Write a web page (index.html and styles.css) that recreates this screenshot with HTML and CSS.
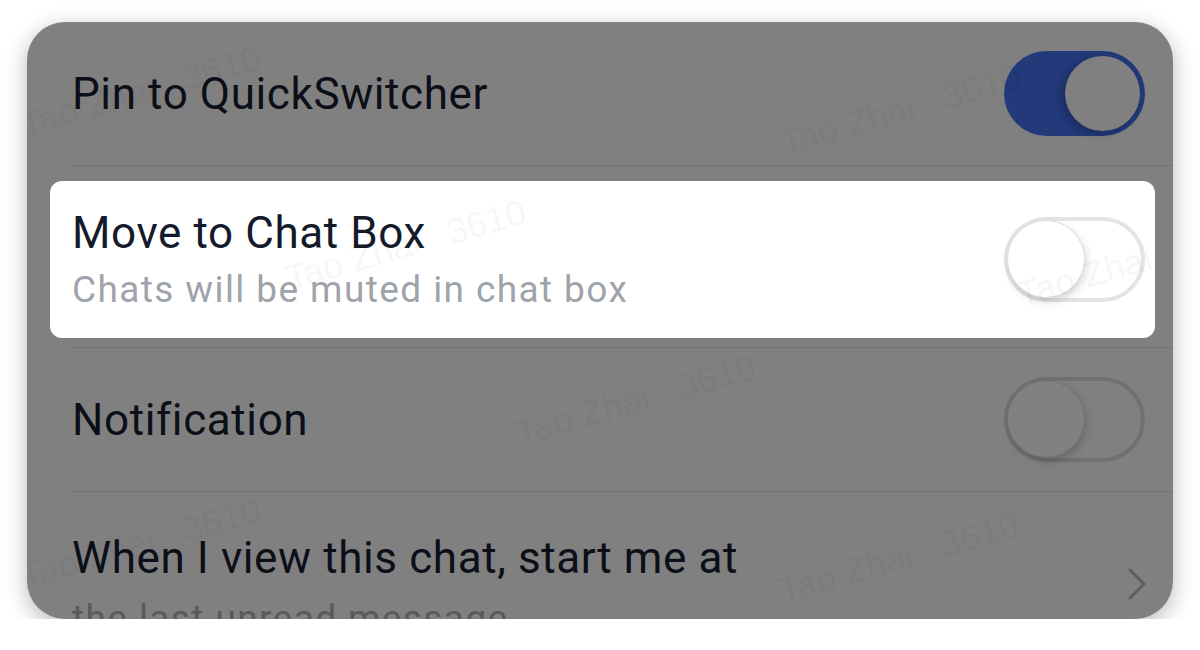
FILE: index.html
```html
<!DOCTYPE html>
<html lang="en">
<head>
  <meta charset="UTF-8" />
  <title>Chat Settings</title>
  <link rel="stylesheet" href="styles.css">
</head>
<body>

<div class="card">
  <div class="row row-pin">
    <span class="title">Pin to QuickSwitcher</span>
    <span class="toggle toggle-on"><span class="knob"></span></span>
  </div>

  <div class="row row-focus">
    <div class="spot">
      <div class="text">
        <div class="title">Move to Chat Box</div>
        <div class="sub">Chats will be muted in chat box</div>
      </div>
      <span class="toggle toggle-off"><span class="knob"></span></span>
    </div>
  </div>

  <div class="row row-notify">
    <span class="title">Notification</span>
    <span class="toggle toggle-dim"><span class="knob"></span></span>
  </div>

  <div class="row row-last">
    <div class="text">
      <div class="title">When I view this chat, start me at</div>
      <div class="sub">the last unread message</div>
    </div>
    <svg class="chevron" width="20" height="32" viewBox="0 0 20 32" aria-hidden="true">
      <path d="M3 2 L17 16 L3 30" fill="none" stroke="#5e5e5e" stroke-width="3" stroke-linecap="round" stroke-linejoin="round"/>
    </svg>
  </div>

  <!-- watermark layer -->
  <div class="marks" aria-hidden="true">
    <span class="mark" style="left:-2px;top:85px">Tao Zhai&nbsp;&nbsp;&nbsp;3610</span>
    <span class="mark" style="left:758px;top:104px">Tao Zhai&nbsp;&nbsp;&nbsp;3610</span>
    <span class="mark" style="left:263px;top:239px">Tao Zhai&nbsp;&nbsp;&nbsp;3610</span>
    <span class="mark" style="left:995px;top:255px">Tao Zhai&nbsp;&nbsp;&nbsp;3610</span>
    <span class="mark" style="left:493px;top:394px">Tao Zhai&nbsp;&nbsp;&nbsp;3610</span>
    <span class="mark" style="left:-2px;top:537px">Tao Zhai&nbsp;&nbsp;&nbsp;3610</span>
    <span class="mark" style="left:756px;top:552px">Tao Zhai&nbsp;&nbsp;&nbsp;3610</span>
  </div>
</div>

</body>
</html>
```

FILE: styles.css
```css
* {
  margin: 0;
  padding: 0;
  box-sizing: border-box;
}
body {
  background: #fff;
  font-family: Roboto, 'Noto Sans', sans-serif;
}
.card {
  position: relative;
  width: 1146px;
  height: 597px;
  margin: 22px auto 0;
  padding-left: 45px;
  background: #808080;
  border-radius: 38px;
  overflow: hidden;
  box-shadow: 0 6px 22px rgba(0,0,0,0.28);
}
.row {
  display: flex;
  align-items: center;
  justify-content: space-between;
  padding-right: 28px;
  border-bottom: 1px solid #747474;
}
.row-pin,
.row-notify {
  height: 144px;
}
.row-focus {
  height: 182px;
  padding-right: 0;
  align-items: flex-start;
}
.row-last {
  align-items: flex-start;
  padding-top: 40px;
  border-bottom: none;
}
.title {
  font-size: 44px;
  line-height: 52px;
  letter-spacing: 0.6px;
  color: #0c0f17;
}
.sub {
  font-size: 37px;
  line-height: 52px;
  letter-spacing: 1.4px;
  margin-top: 9px;
  color: #585a5e;
}
/* highlighted row */
.spot {
  flex: 1;
  display: flex;
  align-items: center;
  justify-content: space-between;
  height: 157px;
  margin: 15px 18px 0 -22px;
  padding: 0 10px 0 22px;
  background: #fff;
  border-radius: 12px;
}
.spot .text {
  margin-top: 4px;
}
.spot .title {
  color: #131a2a;
}
.spot .sub {
  margin-top: 5px;
  color: #9fa3aa;
}
/* switches */
.toggle {
  position: relative;
  flex: none;
  width: 141px;
  height: 85px;
  border-radius: 43px;
}
.toggle .knob {
  position: absolute;
  top: 4px;
  width: 76px;
  height: 76px;
  border-radius: 50%;
}
.toggle-on {
  background: #22397a;
}
.toggle-on .knob {
  right: 5px;
  top: 5px;
  width: 75px;
  height: 75px;
  background: #808080;
  box-shadow: -3px 3px 8px rgba(0,0,0,0.25);
}
.toggle-off {
  border: 4px solid #e4e4e4;
}
.toggle-off .knob {
  top: 0;
  left: 0;
  background: #fff;
  box-shadow: 0 0 0 1px #e0e0e0, 2px 4px 10px rgba(0,0,0,0.18);
}
.toggle-dim {
  border: 4px solid #707070;
}
.toggle-dim .knob {
  top: 0;
  left: 0;
  background: #818181;
  box-shadow: 0 0 0 1px #737373, 2px 4px 10px rgba(0,0,0,0.2);
}
.chevron {
  margin-top: 36px;
  margin-right: -2px;
}
/* watermark */
.marks {
  position: absolute;
  inset: 0;
  pointer-events: none;
}
.mark {
  position: absolute;
  white-space: nowrap;
  font-family: 'Liberation Sans', sans-serif;
  font-size: 36px;
  line-height: 36px;
  color: rgba(0,0,0,0.055);
  transform-origin: 0 31px;
  transform: rotate(-16deg);
}
```
